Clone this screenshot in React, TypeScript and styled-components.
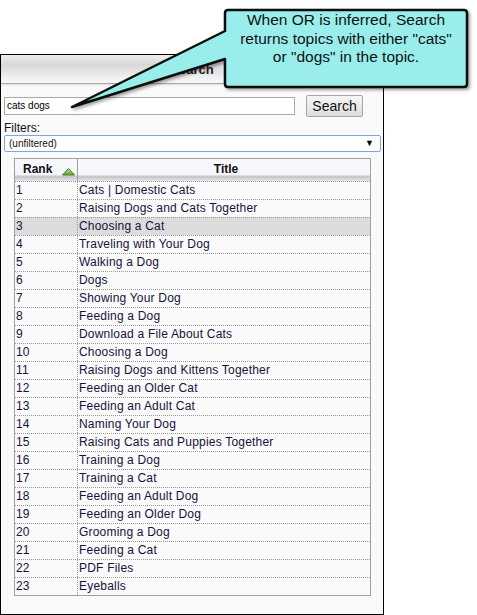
import React from "react";
import styled, { createGlobalStyle } from "styled-components";

const GlobalStyle = createGlobalStyle`
  html, body {
    margin: 0;
    padding: 0;
    background: #ffffff;
  }
  body {
    font-family: "Liberation Sans", Arial, sans-serif;
  }
`;

const Page = styled.div`
  position: relative;
  width: 477px;
  height: 615px;
  padding-top: 54px;
  box-sizing: border-box;
`;

const Panel = styled.div`
  width: 384px;
  height: 561px;
  box-sizing: border-box;
  border: 1px solid #000;
  background: #fafafa;
  display: flex;
  flex-direction: column;
`;

const TitleBar = styled.div`
  height: 29px;
  box-sizing: border-box;
  border-bottom: 1px solid #a8a8a8;
  box-shadow: 0 1px 2px rgba(0, 0, 0, 0.12);
  background: linear-gradient(#eeeeee 0%, #d8d8d8 35%, #f2f2f2 85%, #f8f8f8 100%);
  display: flex;
  align-items: center;
  justify-content: center;
  font-size: 13px;
  font-weight: bold;
  color: #222;
`;

const Body = styled.div`
  padding: 11px 2px 0 3px;
  display: flex;
  flex-direction: column;
`;

const SearchRow = styled.div`
  display: flex;
  align-items: center;
  gap: 11px;
`;

const SearchInput = styled.div`
  width: 291px;
  height: 18px;
  box-sizing: border-box;
  border: 1px solid #a9a9a9;
  background: #fff;
  font-size: 10px;
  line-height: 16px;
  padding-left: 2px;
  color: #000;
`;

const Button = styled.div`
  width: 57px;
  height: 22px;
  box-sizing: border-box;
  border: 1px solid #a5a5a5;
  border-radius: 2px;
  background: linear-gradient(#f6f6f6, #dedede);
  font-size: 14px;
  line-height: 20px;
  text-align: center;
  color: #111;
`;

const Label = styled.div`
  font-size: 12px;
  margin-top: 4px;
  line-height: 14px;
  color: #111;
`;

const Select = styled.div`
  width: 377px;
  height: 17px;
  box-sizing: border-box;
  border: 1px solid #7ea6e6;
  border-radius: 2px;
  background: #fff;
  font-size: 10px;
  line-height: 15px;
  padding: 0 6px 0 4px;
  display: flex;
  justify-content: space-between;
  align-items: center;
  color: #111;
`;

const Arrow = styled.span`
  font-size: 9px;
  color: #000;
`;

const Table = styled.div`
  margin: 6px 0 0 10px;
  width: 357px;
  box-sizing: border-box;
  border: 1px solid #a0a0a0;
  background: #fafafa;
`;

const HeadRow = styled.div`
  display: grid;
  grid-template-columns: 62px 1fr;
  height: 22px;
  background: linear-gradient(#f8f9ff 0%, #f5f6fc 70%, #c4c4c8 80%, #e4e4e8 100%);
  font-size: 12px;
  font-weight: bold;
  color: #111;
`;

const HeadCell = styled.div<{ $center?: boolean }>`
  display: flex;
  align-items: center;
  justify-content: ${(p) => (p.$center ? "center" : "flex-start")};
  gap: 10px;
  padding-left: ${(p) => (p.$center ? "4px" : "8px")};
  padding-bottom: 2px;
  border-left: ${(p) => (p.$center ? "1px solid #a0a0a0" : "none")};
`;

const Row = styled.div<{ $active?: boolean }>`
  display: grid;
  grid-template-columns: 62px 1fr;
  height: 18px;
  box-sizing: border-box;
  border-top: 1px dotted #9a9a9a;
  background: ${(p) => (p.$active ? "#dcdcdc" : "#fafafa")};
  font-size: 12px;
  line-height: 17px;
  letter-spacing: 0.2px;
  color: #14143c;
`;

const Cell = styled.div<{ $title?: boolean }>`
  padding-left: 1px;
  border-left: ${(p) => (p.$title ? "1px dotted #9a9a9a" : "none")};
  white-space: nowrap;
`;

const Callout = styled.div`
  position: absolute;
  left: 0;
  top: 0;
  width: 477px;
  height: 120px;
  pointer-events: none;
`;

const CalloutText = styled.div`
  position: absolute;
  left: 224px;
  top: 11px;
  width: 244px;
  text-align: center;
  font-size: 15.5px;
  line-height: 18.5px;
  color: #111;
`;

const rows = [
  "Cats | Domestic Cats",
  "Raising Dogs and Cats Together",
  "Choosing a Cat",
  "Traveling with Your Dog",
  "Walking a Dog",
  "Dogs",
  "Showing Your Dog",
  "Feeding a Dog",
  "Download a File About Cats",
  "Choosing a Dog",
  "Raising Dogs and Kittens Together",
  "Feeding an Older Cat",
  "Feeding an Adult Cat",
  "Naming Your Dog",
  "Raising Cats and Puppies Together",
  "Training a Dog",
  "Training a Cat",
  "Feeding an Adult Dog",
  "Feeding an Older Dog",
  "Grooming a Dog",
  "Feeding a Cat",
  "PDF Files",
  "Eyeballs",
];

function SortUp() {
  return (
    <svg width="13" height="8" viewBox="0 0 13 8" style={{ marginTop: 5 }}>
      <defs>
        <linearGradient id="sortg" x1="0" y1="0" x2="0" y2="1">
          <stop offset="0" stopColor="#c8e8a0" />
          <stop offset="1" stopColor="#5c9c2c" />
        </linearGradient>
      </defs>
      <polygon points="6.5,0.5 12.5,7 0.5,7" fill="url(#sortg)" stroke="#4a7e22" strokeWidth="1" />
    </svg>
  );
}

export default function App() {
  return (
    <Page>
      <GlobalStyle />
      <Panel>
        <TitleBar>Search</TitleBar>
        <Body>
          <SearchRow>
            <SearchInput>cats dogs</SearchInput>
            <Button>Search</Button>
          </SearchRow>
          <Label>Filters:</Label>
          <Select>
            <span>(unfiltered)</span>
            <Arrow>▼</Arrow>
          </Select>
          <Table>
            <HeadRow>
              <HeadCell>
                Rank
                <SortUp />
              </HeadCell>
              <HeadCell $center>Title</HeadCell>
            </HeadRow>
            {rows.map((title, i) => (
              <Row key={title} $active={i === 2}>
                <Cell>{i + 1}</Cell>
                <Cell $title>{title}</Cell>
              </Row>
            ))}
          </Table>
        </Body>
      </Panel>
      <Callout>
        <svg width="477" height="120" viewBox="0 0 477 120" style={{ overflow: "visible" }}>
          <defs>
            <filter id="shadow" x="-10%" y="-10%" width="130%" height="140%">
              <feDropShadow dx="2" dy="2" stdDeviation="1.5" floodColor="#000" floodOpacity="0.35" />
            </filter>
          </defs>
          <path
            d="M 228 10 H 464 Q 467 10 467 13 V 84 Q 467 87 464 87 H 228 Q 225 87 225 84 V 59 L 72 107 L 225 31 V 13 Q 225 10 228 10 Z"
            fill="#99eeeb"
            stroke="#111"
            strokeWidth="2.5"
            strokeLinejoin="round"
            filter="url(#shadow)"
          />
        </svg>
        <CalloutText>
          When OR is inferred, Search
          <br />
          returns topics with either "cats"
          <br />
          or "dogs" in the topic.
        </CalloutText>
      </Callout>
    </Page>
  );
}
